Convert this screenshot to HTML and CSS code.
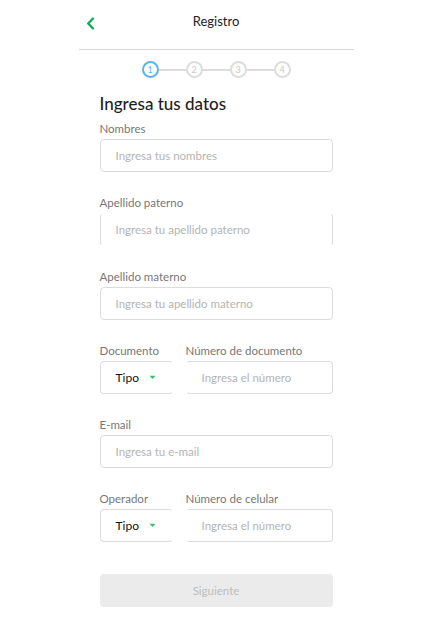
FILE: index.html
```html
<!DOCTYPE html>
<html>
<head>
<meta name="viewport" content="width=device-width, initial-scale=1">
<link rel="stylesheet" href="styles.css">
</head>
<body>
<div class="wrap">
  <div class="top">
    <a class="back" href="#"><svg width="9" height="13" viewBox="0 0 9 13"><path d="M7 1.5L2.2 6.5L7 11.5" fill="none" stroke="#0db057" stroke-width="2.4" stroke-linecap="round" stroke-linejoin="round"/></svg></a>
    <span class="ttl">Registro</span>
  </div>
  <div class="steps">
    <span class="st on">1</span><i></i><span class="st">2</span><i></i><span class="st">3</span><i></i><span class="st">4</span>
  </div>

  <div class="frm">
    <h1>Ingresa tus datos</h1>

    <div class="grp">
      <label>Nombres</label>
      <input type="text" placeholder="Ingresa tus nombres">
    </div>
    <div class="grp">
      <label>Apellido paterno</label>
      <input type="text" class="open" placeholder="Ingresa tu apellido paterno">
    </div>
    <div class="grp">
      <label>Apellido materno</label>
      <input type="text" placeholder="Ingresa tu apellido materno">
    </div>
    <div class="grp row">
      <div class="sm">
        <label>Documento</label>
        <div class="sel">Tipo <svg width="7" height="5" viewBox="0 0 7 5"><path d="M0.5 0.8L3.5 4L6.5 0.8Z" fill="#2fc46d"/></svg></div>
      </div>
      <div class="lg">
        <label>Número de documento</label>
        <input type="text" class="nl" placeholder="Ingresa el número">
      </div>
    </div>
    <div class="grp">
      <label>E-mail</label>
      <input type="text" placeholder="Ingresa tu e-mail">
    </div>
    <div class="grp row">
      <div class="sm">
        <label>Operador</label>
        <div class="sel">Tipo <svg width="7" height="5" viewBox="0 0 7 5"><path d="M0.5 0.8L3.5 4L6.5 0.8Z" fill="#2fc46d"/></svg></div>
      </div>
      <div class="lg">
        <label>Número de celular</label>
        <input type="text" class="nl" placeholder="Ingresa el número">
      </div>
    </div>

    <button class="nxt">Siguiente</button>
  </div>
</div>
</body>
</html>
```
FILE: styles.css
```css
* {box-sizing: border-box;}
body {margin: 0; font-family: Lato, "Noto Sans", sans-serif; color: #222; background: #fff;}

.wrap {
  width: 275px;
  margin: 0 auto;
}

.top {
  position: relative;
  height: 50px;
  border-bottom: 1px solid #d9d9d9;
  text-align: center;
  padding-top: 12px;
  line-height: 16px;
}
.back {
  position: absolute;
  left: 7px;
  top: 16px;
}
.ttl {font-size: 13px; color: #222;}

.steps {
  display: flex;
  align-items: center;
  justify-content: center;
  margin-top: 11px;
  height: 17px;
}
.steps i {
  width: 27px;
  height: 2px;
  background: #dcdcdc;
}
.st {
  width: 17px;
  height: 17px;
  border: 2px solid #dcdcdc;
  border-radius: 50%;
  font-size: 9px;
  color: #c8c8c8;
  display: flex;
  align-items: center;
  justify-content: center;
}
.st.on {border-color: #5db3ea; color: #5db3ea;}

.frm {
  padding: 0 21px;
  margin-top: 16px;
}
.frm h1 {
  font-size: 17px;
  font-weight: 500;
  line-height: 20px;
  margin: 0 0 8px;
  color: #1f1f1f;
}

.grp {margin-bottom: 24px;}
.grp label {
  display: block;
  font-size: 11.5px;
  color: #777;
  margin-bottom: 3px;
  line-height: 14px;
}
.grp input {
  width: 100%;
  height: 33px;
  border: 1px solid #dcdcdc;
  border-radius: 4px;
  padding: 0 15px;
  font-family: inherit;
  font-size: 11.5px;
  outline: none;
}
.grp input::placeholder {color: #b4b4b4;}
.grp input.open {border-top-color: transparent; border-bottom-color: transparent;}

.row {display: flex; gap: 13px;}
.sm {width: 73px;}
.lg {flex: 1;}
.sel {
  height: 33px;
  border: 1px solid #dcdcdc;
  border-right-color: transparent;
  border-radius: 4px;
  padding: 0 15px;
  display: flex;
  align-items: center;
  gap: 10px;
  font-size: 12px;
  color: #111;
}
.grp input.nl {border-left-color: transparent;}

.nxt {
  display: block;
  width: 100%;
  height: 33px;
  margin-top: 32px;
  background: #ebebeb;
  border: none;
  border-radius: 4px;
  color: #bdbdbd;
  font-family: inherit;
  font-size: 11.5px;
}
```
